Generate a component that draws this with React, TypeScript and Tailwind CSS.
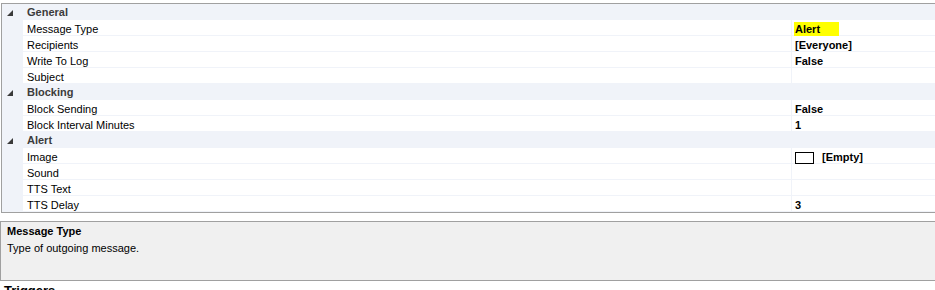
import React from "react";

type Row =
  | { kind: "cat"; label: string }
  | { kind: "prop"; label: string; value?: string; highlight?: boolean; image?: boolean };

const rows: Row[] = [
  { kind: "cat", label: "General" },
  { kind: "prop", label: "Message Type", value: "Alert", highlight: true },
  { kind: "prop", label: "Recipients", value: "[Everyone]" },
  { kind: "prop", label: "Write To Log", value: "False" },
  { kind: "prop", label: "Subject" },
  { kind: "cat", label: "Blocking" },
  { kind: "prop", label: "Block Sending", value: "False" },
  { kind: "prop", label: "Block Interval Minutes", value: "1" },
  { kind: "cat", label: "Alert" },
  { kind: "prop", label: "Image", value: "[Empty]", image: true },
  { kind: "prop", label: "Sound" },
  { kind: "prop", label: "TTS Text" },
  { kind: "prop", label: "TTS Delay", value: "3" },
];

function Glyph() {
  return (
    <svg width="6" height="6" viewBox="0 0 6 6" className="block">
      <polygon points="6,0 6,6 0,6" fill="#3a3a3a" />
    </svg>
  );
}

export default function App() {
  return (
    <div
      className="w-[935px] h-[290px] overflow-hidden bg-white text-[11px] leading-[13px] text-black"
      style={{ fontFamily: '"Liberation Sans", Arial, sans-serif' }}
    >
      <div className="mt-[3px] ml-[1px] w-[960px] border border-[#a0a0a0] bg-[#f0f3f9]">
        {rows.map((r, i) =>
          r.kind === "cat" ? (
            <div key={i} className="flex h-[16px] items-center bg-[#f0f3f9] pt-[1px]">
              <div className="flex w-[21px] items-center pl-[5px]">
                <Glyph />
              </div>
              <div className="pl-[4px] font-bold text-[#3c3c3c]">{r.label}</div>
            </div>
          ) : (
            <div key={i} className="flex h-[16px]">
              <div className="w-[21px] shrink-0 bg-[#f0f3f9]" />
              <div className="flex w-[768px] shrink-0 items-start border-b border-[#f0f3f9] bg-white pl-[4px] pt-[3px]">
                {r.label}
              </div>
              <div className="flex flex-1 items-start border-b border-l border-[#f0f3f9] bg-white pl-[2px] pt-[3px] font-bold">
                {r.highlight ? (
                  <span className="-mt-[1px] flex h-[15px] w-[45px] items-center bg-[#ffff00] pl-[1px]">{r.value}</span>
                ) : r.image ? (
                  <span className="flex items-center">
                    <span className="ml-[1px] h-[12px] w-[19px] border border-black bg-white" />
                    <span className="ml-[8px]">{r.value}</span>
                  </span>
                ) : (
                  <span className="pl-[1px]">{r.value}</span>
                )}
              </div>
            </div>
          )
        )}
      </div>
      <div className="mt-[8px] h-[60px] w-[960px] border border-[#a0a0a0] bg-[#f0f0f0] pl-[6px] pt-[3px]">
        <div className="font-bold">Message Type</div>
        <div className="mt-[4px]">Type of outgoing message.</div>
      </div>
      <div className="mt-[3px] pl-[4px] text-[13px] font-bold">Triggers</div>
    </div>
  );
}
